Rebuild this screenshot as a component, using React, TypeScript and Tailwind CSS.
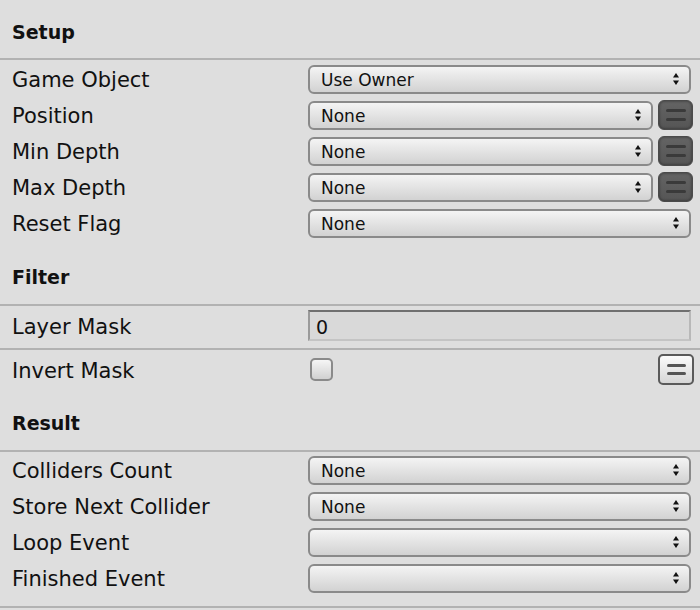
import React from "react";

function Arrows() {
  return (
    <svg width="8" height="14" viewBox="0 0 8 14" className="shrink-0">
      <path d="M4 1 L7 5.5 L1 5.5 Z" fill="#111" />
      <path d="M4 13 L7 8.5 L1 8.5 Z" fill="#111" />
    </svg>
  );
}

function Dropdown({ value, full }: { value?: string; full?: boolean }) {
  return (
    <div
      className={`flex h-[29px] flex-1 items-center justify-between rounded-[6px] border-2 border-[#8a8a8a] bg-gradient-to-b from-[#f4f4f4] to-[#d2d2d2] pl-[11px] pr-[9px] text-[17px] text-[#111] ${
        full ? "mr-[2px]" : ""
      }`}
    >
      <span className="pt-[3px]">{value}</span>
      <Arrows />
    </div>
  );
}

function DarkButton() {
  return (
    <div className="flex h-[30px] w-[35px] shrink-0 flex-col items-center justify-center gap-[6px] rounded-[6px] border border-[#4a4a4a] bg-gradient-to-b from-[#646464] to-[#555] shadow-[inset_0_0_3px_rgba(0,0,0,0.5)]">
      <span className="h-[3px] w-[20px] rounded-full bg-[#3a3a3a]" />
      <span className="h-[3px] w-[20px] rounded-full bg-[#3a3a3a]" />
    </div>
  );
}

function LightButton() {
  return (
    <div className="flex h-[31px] w-[36px] shrink-0 flex-col items-center justify-center gap-[5px] rounded-[5px] border-2 border-[#5a5a5a] bg-gradient-to-b from-[#fbfbfb] to-[#d6d6d6]">
      <span className="h-[3px] w-[19px] rounded-full bg-[#555]" />
      <span className="h-[3px] w-[19px] rounded-full bg-[#555]" />
    </div>
  );
}

function Header({ title, className }: { title: string; className: string }) {
  return (
    <>
      <div className={`flex items-center pl-[12px] text-[19px] font-bold text-[#111] ${className}`}>
        {title}
      </div>
      <div className="h-[2px] bg-[#b2b2b2]" />
    </>
  );
}

function Row({ label, children }: { label: string; children: React.ReactNode }) {
  return (
    <div className="flex h-[36px] items-center pl-[12px] pr-[7px]">
      <div className="w-[296px] shrink-0 pt-[4px] text-[21px] text-[#111]">{label}</div>
      <div className="flex flex-1 items-center gap-[5px]">{children}</div>
    </div>
  );
}

export default function App() {
  return (
    <div
      className="h-[610px] w-[700px] overflow-hidden bg-[#dedede]"
      style={{ fontFamily: '"DejaVu Sans", sans-serif' }}
    >
      <Header title="Setup" className="h-[58px] pt-[6px]" />
      <div className="pt-[1px]">
        <Row label="Game Object">
          <Dropdown value="Use Owner" full />
        </Row>
        <Row label="Position">
          <Dropdown value="None" />
          <DarkButton />
        </Row>
        <Row label="Min Depth">
          <Dropdown value="None" />
          <DarkButton />
        </Row>
        <Row label="Max Depth">
          <Dropdown value="None" />
          <DarkButton />
        </Row>
        <Row label="Reset Flag">
          <Dropdown value="None" full />
        </Row>
      </div>

      <Header title="Filter" className="h-[63px] pt-[9px]" />
      <div className="mb-[7px] mt-[4px] flex h-[31px] items-center pl-[12px] pr-[7px]">
        <div className="w-[296px] shrink-0 pt-[4px] text-[21px] text-[#111]">Layer Mask</div>
        <div className="mr-[2px] flex h-[31px] flex-1 items-center border-2 border-t-[#707070] border-l-[#9a9a9a] border-r-[#b8b8b8] border-b-[#c4c4c4] bg-[#d9d9d9] pl-[6px] pt-[3px] text-[19px] text-[#111]">
          0
        </div>
      </div>
      <div className="h-[2px] bg-[#b2b2b2]" />
      <div className="mt-[4px] flex h-[31px] items-center pl-[12px] pr-[6px]">
        <div className="w-[298px] shrink-0 pt-[4px] text-[21px] text-[#111]">Invert Mask</div>
        <div className="flex flex-1 items-center justify-between">
          <div className="h-[23px] w-[23px] rounded-[5px] border-2 border-[#8a8a8a] bg-gradient-to-b from-[#f6f6f6] to-[#d0d0d0]" />
          <LightButton />
        </div>
      </div>

      <Header title="Result" className="h-[65px] pt-[11px]" />
      <div className="pb-[10px]">
        <Row label="Colliders Count">
          <Dropdown value="None" full />
        </Row>
        <Row label="Store Next Collider">
          <Dropdown value="None" full />
        </Row>
        <Row label="Loop Event">
          <Dropdown full />
        </Row>
        <Row label="Finished Event">
          <Dropdown full />
        </Row>
      </div>
      <div className="h-[2px] bg-[#b2b2b2]" />
    </div>
  );
}
